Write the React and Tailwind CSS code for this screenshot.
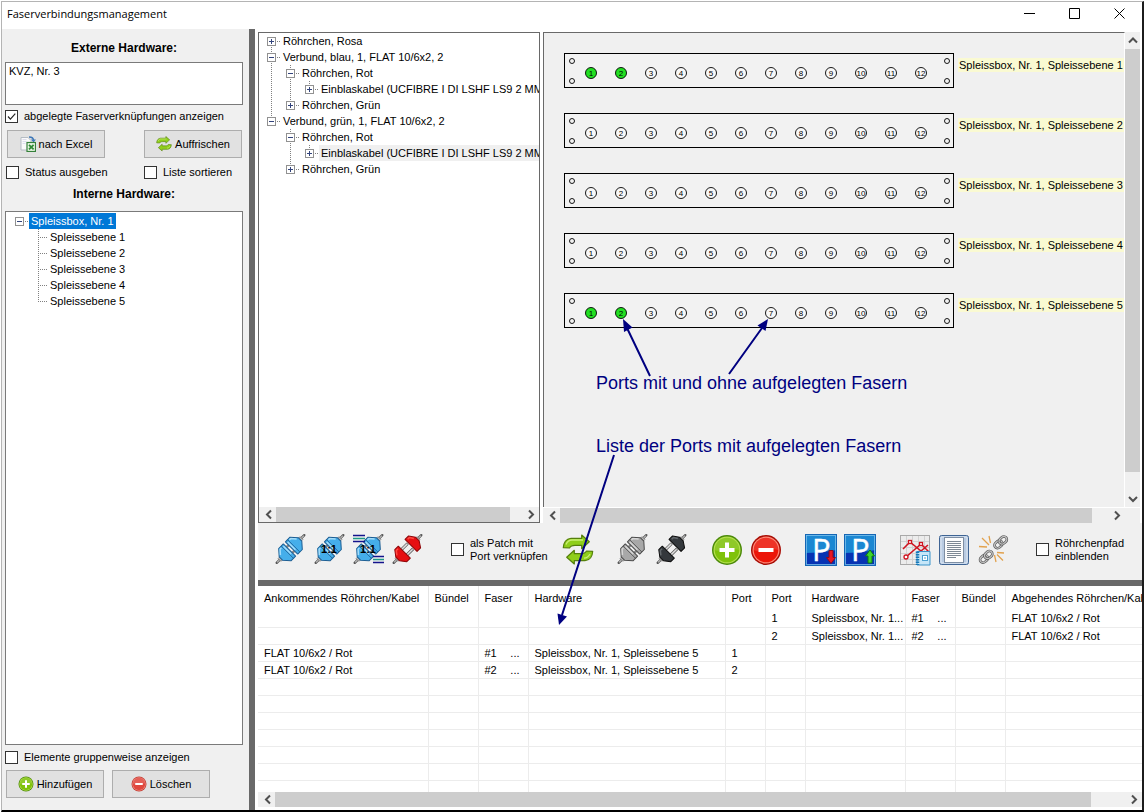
import { useState, memo } from 'react'
import clsx from 'clsx'

// ============================================================
// Data
// ============================================================

const interneHardware = [
  {
    label: 'Spleissbox, Nr. 1',
    selected: true,
    open: true,
    children: [
      { label: 'Spleissebene 1' },
      { label: 'Spleissebene 2' },
      { label: 'Spleissebene 3' },
      { label: 'Spleissebene 4' },
      { label: 'Spleissebene 5' },
    ],
  },
]

const kabel = 'Einblaskabel (UCFIBRE I DI LSHF LS9 2 MM5'

const kabelbaum = [
  { label: 'Röhrchen, Rosa', open: false, children: [] },
  {
    label: 'Verbund, blau, 1, FLAT 10/6x2, 2',
    open: true,
    children: [
      { label: 'Röhrchen, Rot', open: true, children: [{ label: kabel, open: false, children: [] }] },
      { label: 'Röhrchen, Grün', open: false, children: [] },
    ],
  },
  {
    label: 'Verbund, grün, 1, FLAT 10/6x2, 2',
    open: true,
    children: [
      { label: 'Röhrchen, Rot', open: true, children: [{ label: kabel, marked: true, open: false, children: [] }] },
      { label: 'Röhrchen, Grün', open: false, children: [] },
    ],
  },
]

const ebenen = [
  { name: 'Spleissbox, Nr. 1, Spleissebene 1', used: [1, 2] },
  { name: 'Spleissbox, Nr. 1, Spleissebene 2', used: [] },
  { name: 'Spleissbox, Nr. 1, Spleissebene 3', used: [] },
  { name: 'Spleissbox, Nr. 1, Spleissebene 4', used: [] },
  { name: 'Spleissbox, Nr. 1, Spleissebene 5', used: [1, 2] },
]

const columns = [
  { label: 'Ankommendes Röhrchen/Kabel', width: 'w-[170px]' },
  { label: 'Bündel', width: 'w-[50px]' },
  { label: 'Faser', width: 'w-[50px]' },
  { label: 'Hardware', width: 'w-[197px]' },
  { label: 'Port', width: 'w-[40px]' },
  { label: 'Port', width: 'w-[40px]' },
  { label: 'Hardware', width: 'w-[100px]' },
  { label: 'Faser', width: 'w-[50px]' },
  { label: 'Bündel', width: 'w-[50px]' },
  { label: 'Abgehendes Röhrchen/Kab', width: 'w-[170px]' },
]

const rows = [
  ['', '', '', '', '', '1', 'Spleissbox, Nr. 1...', '#1', '', 'FLAT 10/6x2 / Rot'],
  ['', '', '', '', '', '2', 'Spleissbox, Nr. 1...', '#2', '', 'FLAT 10/6x2 / Rot'],
  ['FLAT 10/6x2 / Rot', '', '#1', 'Spleissbox, Nr. 1, Spleissebene 5', '1', '', '', '', '', ''],
  ['FLAT 10/6x2 / Rot', '', '#2', 'Spleissbox, Nr. 1, Spleissebene 5', '2', '', '', '', '', ''],
  ...Array.from({ length: 7 }, () => Array(10).fill('')),
]

// ============================================================
// Controls
// ============================================================

const Check = ({ children, defaultChecked, className }) => {
  const [on, setOn] = useState(!!defaultChecked)
  return (
    <label className={clsx('flex items-center gap-1.5 whitespace-nowrap', className)}>
      <span className="grid shrink-0">
        <input
          type="checkbox"
          checked={on}
          onChange={e => setOn(e.target.checked)}
          className="col-start-1 row-start-1 size-[13px] appearance-none border border-[#333] bg-white"
        />
        {on && (
          <svg className="pointer-events-none col-start-1 row-start-1 size-[13px]" viewBox="0 0 13 13">
            <path d="M3 6.5l2.4 2.6L10.3 3.6" fill="none" stroke="#222" strokeWidth="1.2" />
          </svg>
        )}
      </span>
      <span>{children}</span>
    </label>
  )
}

const PushButton = ({ icon, children }) => (
  <button className="flex h-7 w-[98px] items-center justify-center gap-[3px] border border-[#adadad] bg-[#e1e1e1] hover:bg-[#e5f1fb]">
    {icon}
    <span>{children}</span>
  </button>
)

const arrows = {
  left: 'M9 1.5L5 5.5l4 4',
  right: 'M4 1.5l4 4-4 4',
  up: 'M2 7.5l4-4 4 4',
  down: 'M2 4l4 4 4-4',
}

const ScrollArrow = ({ dir, label }) => (
  <button aria-label={label} className="flex size-[17px] shrink-0 items-center justify-center">
    <svg className="size-3" viewBox="0 0 12 12">
      <path d={arrows[dir]} fill="none" stroke="#505050" strokeWidth="2" />
    </svg>
  </button>
)

const HScroll = ({ thumb }) => (
  <div className="flex h-[15px] shrink-0 items-center bg-[#f0f0f0]">
    <ScrollArrow dir="left" label="Nach links" />
    <div className="h-full flex-1">
      <div className={clsx('h-full bg-[#cdcdcd]', thumb)} />
    </div>
    <ScrollArrow dir="right" label="Nach rechts" />
  </div>
)

const VScroll = ({ thumb }) => (
  <div className="flex w-[15px] shrink-0 flex-col items-center bg-[#f0f0f0]">
    <ScrollArrow dir="up" label="Nach oben" />
    <div className="w-full flex-1">
      <div className={clsx('w-full bg-[#cdcdcd]', thumb)} />
    </div>
    <ScrollArrow dir="down" label="Nach unten" />
  </div>
)

// ============================================================
// Tree
// ============================================================

// One 19px column of the dotted guide lines, with the +/- box where there is one
const Guide = ({ up, down, side, box }) => (
  <svg className="h-4 w-[19px] shrink-0" viewBox="0 0 19 16">
    <g stroke="#808080" strokeDasharray="1 1" fill="none">
      {up && <path d="M9.5 0V8" />}
      {down && <path d="M9.5 8V16" />}
      {side && <path d="M9 8.5H19" />}
    </g>
    {box && (
      <>
        <rect x="5.5" y="4.5" width="8" height="8" fill="#fff" stroke="#919191" />
        <path d="M7 8.5h5" stroke="#33447c" />
        {box === 'plus' && <path d="M9.5 6v5" stroke="#33447c" />}
      </>
    )}
  </svg>
)

const TreeNode = ({ node, pass, first, last }) => {
  const box = node.children && (node.open ? 'minus' : 'plus')
  return (
    <li>
      <div className="flex h-4 items-center">
        {pass.map((on, i) => (
          <Guide key={i} up={on} down={on} />
        ))}
        <Guide up={!first} down={!last} side box={box} />
        <span
          className={clsx(
            'h-4 px-0.5 leading-4',
            node.selected && 'bg-[#0078d7] text-white',
            node.marked && 'flex-1 bg-[#f0f0f0]',
          )}
        >
          {node.label}
        </span>
      </div>
      {node.open && node.children && (
        <ul>
          {node.children.map((child, i) => (
            <TreeNode key={i} node={child} pass={[...pass, !last]} last={i === node.children.length - 1} />
          ))}
        </ul>
      )}
    </li>
  )
}

const Tree = ({ nodes, className }) => (
  <ul className={clsx('flex-1 overflow-hidden whitespace-nowrap', className)}>
    {nodes.map((node, i) => (
      <TreeNode key={i} node={node} pass={[]} first={i === 0} last={i === nodes.length - 1} />
    ))}
  </ul>
)

// ============================================================
// Icons
// ============================================================

const RefreshIcon = ({ className }) => {
  const arrow = 'M1.3 13.7C1.5 9 4 4.6 9 4.3H19.7V1L27.3 7.7 19.7 14.7V11.3H13C10 11.3 8.5 12 7.5 14Z'
  return (
    <svg className={className} viewBox="0 0 32 32">
      <g fill="#8fce1b" stroke="#557f0c" strokeWidth="1.2" strokeLinejoin="round">
        <path d={arrow} />
        <path d={arrow} transform="rotate(180 16 15.5)" />
      </g>
      <path d="M4 10.5C5.5 7 7.5 6 10 6h11M28 20c-1.5 3-3.5 4-6 4.2" fill="none" stroke="#c9ef74" strokeWidth="1.3" />
    </svg>
  )
}

const RoundIcon = ({ className, color, dark, light, minus }) => (
  <svg className={className} viewBox="0 0 32 32">
    <circle cx="16" cy="16" r="15" fill={dark} />
    <circle cx="16" cy="16" r="13.5" fill={light} />
    <circle cx="16" cy="16" r="12.3" fill={color} />
    <path d="M3.7 16a12.3 12.3 0 0 1 24.6 0C22 13 10 19 3.7 16Z" fill="#fff" opacity="0.13" />
    <path d={minus ? 'M8.5 16h15' : 'M8.5 16h15M16 8.5v15'} stroke="#fff" strokeWidth="4" />
  </svg>
)

const AddIcon = ({ className }) => <RoundIcon className={className} color="#7fc20a" dark="#4b8a08" light="#b5e04e" />

const ExcelIcon = () => (
  <svg className="size-4" viewBox="0 0 16 16">
    <path d="M1 1.5h7l3 3V14H1Z" fill="#fafafa" stroke="#b5bcc4" />
    <path d="M2.5 3.5h4M2.5 5.5h4M2.5 7.5h3" stroke="#dde" />
    <path d="M9 1c3 0 4.5 1 4.5 3.5" fill="none" stroke="#3f78b8" strokeWidth="1.5" />
    <path d="M11 3.5h5L13.5 6.5Z" fill="#3f78b8" />
    <rect x="7" y="6.5" width="8.5" height="9" fill="#e8f5e4" stroke="#35803a" strokeWidth="1.2" />
    <path d="M9 8.8l4.6 4.6M13.6 8.8l-4.6 4.6" stroke="#2f8a35" strokeWidth="1.8" />
  </svg>
)

const plugColors = {
  blue: { fill: '#45aeea', light: '#a4dcf9', edge: '#1c5d92' },
  gray: { fill: '#a8a8a8', light: '#d6d6d6', edge: '#4a4a4a' },
  red: { fill: '#e60f12', light: '#ff4a42', edge: '#8d0508' },
  black: { fill: '#34383c', light: '#63686c', edge: '#0c0c0c' },
}

// Two connector halves on a diagonal; pulled apart the pins become visible
const PlugIcon = ({ color, open, ratio, lines }) => {
  const c = plugColors[color]
  return (
    <svg className="size-8 overflow-visible" viewBox="0 0 32 32">
      <g transform="translate(15.5 15) rotate(-45)" strokeLinejoin="round">
        <path d="M-19.5 0H-14M14 0H19.5" stroke="#555" strokeWidth="2.4" strokeLinecap="round" />
        <path d="M-19 0H-14M14 0H19" stroke="#c4c4c4" strokeWidth="1" />
        <path d="M-15.5-2h3v4h-3ZM15.5-2h-3v4h3Z" fill="#bdbdbd" stroke="#666" strokeWidth="0.6" />
        {open ? (
          <>
            <path d="M-6-3.8H4M-6 3.8H4" stroke="#555" strokeWidth="3" />
            <path d="M-6-3.8H3.5M-6 3.8H3.5" stroke="#ddd" strokeWidth="1.6" />
            <path d="M-14-2.5L-9.5-8.5H-4.5V8.5H-9.5L-14 2.5Z" fill={c.fill} stroke={c.edge} />
            <path d="M14-2.5L10-8.5H5V8.5H10L14 2.5Z" fill={c.fill} stroke={c.edge} />
            <path d="M-12-3L-9-6.8H-6.5M12-3L9.5-6.8H7" fill="none" stroke={c.light} strokeWidth="1.5" />
          </>
        ) : (
          <>
            <path d="M-1.5-4H1.5M-1.5 4H1.5" stroke="#888" strokeWidth="2.5" />
            <path d="M-13.5-2.5L-8-8.7H-1.5V8.7H-8L-13.5 2.5Z" fill={c.fill} stroke={c.edge} />
            <path d="M13.5-2.5L8-8.7H1.5V8.7H8L13.5 2.5Z" fill={c.fill} stroke={c.edge} />
            <path d="M-4.5-8.7V8.7M4.5-8.7V8.7" stroke={c.edge} strokeWidth="0.8" />
            <path
              d="M-11.5-2.8L-7.5-7.2H-5.7M11.5-2.8L7.5-7.2H5.7M-3-7V4M3-7V4"
              fill="none"
              stroke={c.light}
              strokeWidth="1.5"
            />
          </>
        )}
      </g>
      {ratio && (
        <text x="15" y="18.5" textAnchor="middle" fontSize="11" fontWeight="bold" fill="#000">
          1:1
        </text>
      )}
      {lines && (
        <g strokeWidth="1.3">
          <path d="M0 1.5h12M20 22.5h11" stroke="#14148c" />
          <path d="M0 4.5h12M20 25.5h11" stroke="#1f9a86" />
          <path d="M0 7.5h12M20 28.5h11" stroke="#14148c" />
        </g>
      )}
    </svg>
  )
}

const ParkIcon = ({ up }) => (
  <svg className="size-8" viewBox="0 0 32 32">
    <rect width="32" height="32" fill="#1b87d2" />
    <path d="M0 19c10 0 20-1 32-3v16H0Z" fill="#0733b3" />
    <rect x="0.5" y="0.5" width="31" height="31" fill="none" stroke="#1566b4" />
    <rect x="1.5" y="1.5" width="29" height="29" fill="none" stroke="#7cc3ee" strokeWidth="0.8" />
    <text x="7" y="27" fontSize="31" fill="#fff" stroke="#fff" strokeWidth="0.4" fontFamily="Open Sans, sans-serif">
      P
    </text>
    {up ? (
      <path d="M26 16l4.5 6h-2.5v7h-4v-7h-2.5Z" fill="#3fd52c" stroke="#0c7a12" />
    ) : (
      <path d="M26 29.5l-4.5-6h2.5v-7h4v7h2.5Z" fill="#e81522" stroke="#8c0a1e" />
    )}
  </svg>
)

const ChartIcon = () => (
  <svg className="size-8" viewBox="0 0 32 32">
    <rect x="1.5" y="1.5" width="29" height="29" fill="#ececec" stroke="#a9a9a9" />
    <path
      d="M7.5 2v28M13.5 2v28M19.5 2v28M25.5 2v28M2 7.5h28M2 13.5h28M2 19.5h28M2 25.5h28"
      stroke="#d2d2d2"
    />
    <path d="M4 15L11 8l11 9 7-6M7 23L22 10l8 8" fill="none" stroke="#cf1420" strokeWidth="1.6" />
    <g fill="#fff" stroke="#cf1420" strokeWidth="1.3">
      <rect x="9.5" y="6.5" width="3" height="3" />
      <rect x="20.5" y="8.5" width="3" height="3" />
      <circle cx="7" cy="23" r="2" />
    </g>
    <path d="M18 17.5h13v13.5H18Z" fill="#c6e6f8" stroke="#3b93c9" />
    <path d="M18.5 17.5v13.5" stroke="#1878b8" strokeWidth="3.5" strokeDasharray="1.5 1" />
    <rect x="23.5" y="21.5" width="5" height="5" fill="#fff" stroke="#4a9fd0" />
    <path d="M25 24h2" stroke="#4a9fd0" />
  </svg>
)

const DocIcon = () => (
  <svg className="size-8" viewBox="0 0 32 32">
    <rect x="1.5" y="1.5" width="29" height="29" rx="2" fill="#b9cbe2" stroke="#3f6494" />
    <rect x="3" y="3" width="26" height="26" rx="1" fill="none" stroke="#dfe9f5" />
    <rect x="6.5" y="3.5" width="19" height="25" fill="#fdfdfd" stroke="#7e8ea3" />
    <path
      d="M9 7.5h14M9 9.5h14M9 11.5h14M9 13.5h14M9 15.5h14M9 17.5h14M9 19.5h14M9 21.5h14M9 23.5h9"
      stroke="#7d8894"
    />
  </svg>
)

const ChainIcon = () => (
  <svg className="size-8" viewBox="0 0 32 32">
    {['translate(23.5 8.5) rotate(-42)', 'translate(9 23) rotate(-42)'].map(t => (
      <g key={t} transform={t} fill="none">
        <rect x="-7" y="-3" width="8.5" height="6" rx="3" stroke="#5a5a5a" strokeWidth="2.6" />
        <rect x="-7" y="-3" width="8.5" height="6" rx="3" stroke="#c4c4c4" strokeWidth="1.2" />
        <rect x="-1" y="-3" width="8.5" height="6" rx="3" stroke="#5a5a5a" strokeWidth="2.6" />
        <rect x="-1" y="-3" width="8.5" height="6" rx="3" stroke="#c4c4c4" strokeWidth="1.2" />
      </g>
    ))}
    <path
      d="M5 4l7 7M12 2l1.500 7M2 12.500l8 0.500M20 20.500l6 6M17.500 21l1.500 7M20 18.500l7 0.500"
      stroke="#e2a24e"
      strokeWidth="1.3"
    />
  </svg>
)

// ============================================================
// Panes
// ============================================================

const TitleBar = () => (
  <header className="flex h-[27px] shrink-0 items-center justify-between bg-white pl-[5px]">
    <h1 className="pb-1 font-['Open_Sans',sans-serif] text-[11px]">Faserverbindungsmanagement</h1>
    <div className="flex">
      {[
        ['Minimieren', 'M0 5.5h11'],
        ['Maximieren', 'M0.5 0.5h10v10h-10Z'],
        ['Schließen', 'M0.5 0.5l10 10M10.5 0.5l-10 10'],
      ].map(([name, d]) => (
        <button key={name} aria-label={name} className="flex h-7 w-[45px] items-center justify-center pb-1">
          <svg className="size-[11px]" viewBox="0 0 11 11">
            <path d={d} fill="none" stroke="#000" />
          </svg>
        </button>
      ))}
    </div>
  </header>
)

const Sidebar = () => (
  <aside className="flex w-[247px] shrink-0 flex-col bg-[#f0f0f0] pt-[9px] pr-1.5 pb-3 pl-[3px]">
    <label htmlFor="extern" className="text-center text-[12px] leading-5 font-bold">
      Externe Hardware:
    </label>
    <textarea
      id="extern"
      readOnly
      defaultValue="KVZ, Nr. 3"
      className="mt-1 h-[43px] shrink-0 resize-none border border-[#7a7a7a] bg-white px-[3px] leading-4 outline-none"
    />
    <Check defaultChecked className="mt-[3px] h-4">
      abgelegte Faserverknüpfungen anzeigen
    </Check>
    <div className="mt-1.5 flex justify-between pr-px pl-0.5">
      <PushButton icon={<ExcelIcon />}>nach Excel</PushButton>
      <PushButton icon={<RefreshIcon className="size-4" />}>Auffrischen</PushButton>
    </div>
    <div className="mt-1.5 flex justify-between pr-px pl-px">
      <Check className="h-4">Status ausgeben</Check>
      <Check className="h-4 w-[98px]">Liste sortieren</Check>
    </div>
    <h2 className="mt-1 text-center text-[12px] leading-5 font-bold">Interne Hardware:</h2>
    <div className="mt-[7px] flex min-h-0 flex-1 flex-col border border-[#7a7a7a] bg-white">
      <Tree nodes={interneHardware} className="pt-px pl-1" />
    </div>
    <Check className="mt-1 h-4">Elemente gruppenweise anzeigen</Check>
    <div className="mt-[5px] flex gap-2 pl-px">
      <PushButton icon={<AddIcon className="size-4" />}>Hinzufügen</PushButton>
      <PushButton icon={<RoundIcon className="size-4" color="#e0483e" dark="#c23a30" light="#f08a80" minus />}>
        Löschen
      </PushButton>
    </div>
  </aside>
)

const Patchfeld = memo(({ used }) => (
  <svg className="h-[35px] w-[390px] shrink-0" viewBox="0 0 390 35">
    <rect x="0.5" y="0.5" width="389" height="34" fill="#f2f2f2" stroke="#000" />
    {[8, 383].map(x => (
      <g key={x} fill="none" stroke="#000" strokeWidth="0.9">
        <circle cx={x} cy="8" r="2.5" />
        <circle cx={x} cy="28" r="2.5" />
      </g>
    ))}
    {Array.from({ length: 12 }, (_, i) => i + 1).map(n => (
      <g key={n}>
        <circle
          cx={n * 30 - 3}
          cy="20"
          r="5.5"
          fill={used.includes(n) ? '#22e022' : '#f8f8f8'}
          stroke="#000"
          strokeWidth="0.9"
        />
        <text x={n * 30 - 3} y="23" textAnchor="middle" fontSize="8">
          {n}
        </text>
      </g>
    ))}
  </svg>
))

const Notes = () => (
  <div className="pointer-events-none absolute inset-0 z-10 text-[18px] leading-5 whitespace-nowrap text-[#000080]">
    <svg className="absolute top-0 left-0 h-[600px] w-[300px] overflow-visible">
      <g stroke="#000080" strokeWidth="2">
        <path d="M107 344L84 296M186 342L219 296M71 423L19 583" />
      </g>
      <g fill="#000080">
        <path d="M80 287l9.5 8.5-8.5 4.5Z" />
        <path d="M225 287l-2.5 12-8-5.5Z" />
        <path d="M16 593l-1.5-11.5 9.5 3Z" />
      </g>
    </svg>
    <p className="absolute top-[341px] left-[53px]">Ports mit und ohne aufgelegten Fasern</p>
    <p className="absolute top-[404px] left-[53px]">Liste der Ports mit aufgelegten Fasern</p>
  </div>
)

const PortView = () => (
  <section className="relative flex min-w-0 flex-1 flex-col bg-[#f0f0f0]">
    <div className="flex min-h-0 flex-1">
      <div className="flex min-w-0 flex-1 flex-col gap-[25px] overflow-hidden border-t border-r border-l border-t-[#696969] border-r-white border-l-[#696969] pt-5 pl-5">
        {ebenen.map(e => (
          <div key={e.name} className="flex items-start gap-1">
            <Patchfeld used={e.used} />
            <span className="mt-[5px] h-3.5 flex-1 bg-[#fafad2] pl-px leading-[14px] whitespace-nowrap">{e.name}</span>
          </div>
        ))}
      </div>
      <VScroll thumb="h-[96%]" />
    </div>
    <div className="border-t border-white pr-[15px]">
      <HScroll thumb="w-[97%]" />
    </div>
    <Notes />
  </section>
)

const Tool = ({ label, children }) => (
  <button aria-label={label} className="size-8 shrink-0">
    {children}
  </button>
)

const Toolbar = () => (
  <div className="flex h-[57px] shrink-0 items-center gap-[23px] overflow-hidden bg-[#f0f0f0] pb-1 pl-[17px]">
    <div className="flex gap-[7px]">
      <Tool label="Verbinden"><PlugIcon color="blue" /></Tool>
      <Tool label="1:1 verbinden"><PlugIcon color="blue" ratio /></Tool>
      <Tool label="Alle 1:1 verbinden"><PlugIcon color="blue" ratio lines /></Tool>
      <Tool label="Trennen"><PlugIcon color="red" open /></Tool>
    </div>
    <div className="flex items-center pl-1">
      <Check className="w-[111px] shrink-0 leading-[13px]">
        als Patch mit
        <br />
        Port verknüpfen
      </Check>
      <Tool label="Aktualisieren"><RefreshIcon className="size-8" /></Tool>
    </div>
    <div className="flex gap-[7px]">
      <Tool label="Patch verbinden"><PlugIcon color="gray" /></Tool>
      <Tool label="Patch trennen"><PlugIcon color="black" open /></Tool>
    </div>
    <div className="flex gap-[7px]">
      <Tool label="Hinzufügen"><AddIcon className="size-8" /></Tool>
      <Tool label="Entfernen"><RoundIcon className="size-8" color="#ec1508" dark="#a80c04" light="#ff8a78" minus /></Tool>
    </div>
    <div className="flex gap-[7px]">
      <Tool label="Parken"><ParkIcon /></Tool>
      <Tool label="Ausparken"><ParkIcon up /></Tool>
    </div>
    <div className="flex gap-[7px]">
      <Tool label="Diagramm"><ChartIcon /></Tool>
      <Tool label="Bericht"><DocIcon /></Tool>
      <Tool label="Verknüpfung lösen"><ChainIcon /></Tool>
    </div>
    <Check className="pl-1 leading-[13px]">
      Röhrchenpfad
      <br />
      einblenden
    </Check>
  </div>
)

const Cell = ({ value }) =>
  value.startsWith('#') ? (
    <span className="flex justify-between pr-2">
      <span>{value}</span>
      <span>...</span>
    </span>
  ) : (
    value
  )

const PortTable = () => (
  <div className="shrink-0 bg-white pb-[3px]">
    <div className="h-[206px] overflow-hidden">
      <table className="w-full min-w-[917px] table-fixed border-collapse text-left whitespace-nowrap">
        <thead>
          <tr className="h-6">
            {columns.map((c, i) => (
              <th key={i} className={clsx('border-r border-[#e5e5e5] p-0 pl-1.5 font-normal', c.width)}>
                {c.label}
              </th>
            ))}
          </tr>
        </thead>
        <tbody>
          {rows.map((row, i) => (
            <tr key={i} className="h-[17px]">
              {row.map((value, j) => (
                <td key={j} className="border-r border-b border-[#ececec] p-0 pl-1.5 leading-4">
                  <Cell value={value} />
                </td>
              ))}
            </tr>
          ))}
        </tbody>
      </table>
    </div>
    <HScroll thumb="w-[96%]" />
  </div>
)

export default function App() {
  return (
    <div className="flex h-screen min-h-[560px] flex-col bg-white pt-px pl-px font-['Liberation_Sans',Arial,sans-serif] text-[11px] leading-4 text-black">
      <div className="flex min-h-0 flex-1 flex-col overflow-hidden border-t border-r-2 border-b-2 border-l border-t-[#b4b4b4] border-r-[#1c1c1c] border-b-black border-l-[#b4b4b4]">
        <TitleBar />
        <div className="flex min-h-0 flex-1">
          <Sidebar />
          <div className="w-1.5 shrink-0 bg-[#696969]" />
          <main className="flex min-w-0 flex-1 flex-col pl-[3px]">
            <div className="flex min-h-0 flex-1 gap-[3px] pt-[3px] pr-0.5">
              <div className="flex w-[282px] shrink-0 flex-col border border-[#696969] bg-white">
                <Tree nodes={kabelbaum} className="pl-[3px]" />
                <HScroll thumb="w-[95%]" />
              </div>
              <PortView />
            </div>
            <Toolbar />
            <div className="h-1.5 shrink-0 bg-[#696969]" />
            <PortTable />
          </main>
        </div>
      </div>
    </div>
  )
}
